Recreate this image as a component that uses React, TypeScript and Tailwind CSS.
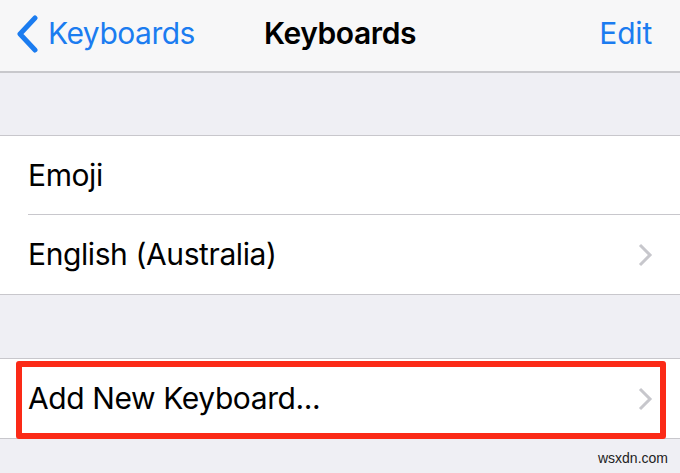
import React from "react";

const font = { fontFamily: "Inter, 'Noto Sans', sans-serif" };

function Chevron() {
  return (
    <svg width="16" height="24" viewBox="0 0 16 24" className="shrink-0">
      <path d="M3 2 L13 12 L3 22" fill="none" stroke="#c7c7cc" strokeWidth="3" />
    </svg>
  );
}

function Row({ label, chevron, separator }: { label: string; chevron?: boolean; separator?: boolean }) {
  return (
    <div className="bg-white pl-[28px]">
      <div className={`flex h-[79px] items-center pr-[27px] ${separator ? "border-b border-[#c8c7cc]" : ""}`}>
        <span className="flex-1 text-[30px] text-black tracking-[-0.4px]">{label}</span>
        {chevron && <Chevron />}
      </div>
    </div>
  );
}

export default function App() {
  return (
    <div className="w-[680px] h-[473px] bg-[#efeff4] overflow-hidden relative" style={font}>
      <div className="h-[73px] bg-[#f7f7f8] border-b-2 border-[#c8c8cc] flex items-center px-[16px] pb-[4px] relative">
        <div className="flex items-center gap-[10px] text-[#1b7cf0]">
          <svg width="22" height="38" viewBox="0 0 22 38">
            <path d="M19 3 L4 19 L19 35" fill="none" stroke="#1b7cf0" strokeWidth="5" strokeLinecap="round" strokeLinejoin="round" />
          </svg>
          <span className="text-[30px] tracking-[-0.5px]">Keyboards</span>
        </div>
        <div className="absolute left-0 right-0 text-center text-[30px] font-semibold text-black tracking-[-0.4px] pointer-events-none">
          Keyboards
        </div>
        <span className="ml-auto mr-[12px] text-[30px] text-[#1b7cf0] tracking-[-0.2px]">Edit</span>
      </div>

      <div className="h-[63px] border-b border-[#c8c7cc]" />
      <Row label="Emoji" separator />
      <Row label="English (Australia)" chevron />
      <div className="h-[65px] border-y border-[#c8c7cc]" />
      <div className="relative">
        <Row label="Add New Keyboard..." chevron />
        <div className="absolute left-[16px] right-[14px] top-[2px] bottom-[-1px] border-[6px] border-[#fb2a17] rounded-[3px]" />
      </div>
      <div className="border-t border-[#c8c7cc]" />
      <div className="absolute right-[12px] bottom-[4px] text-[14px] text-[#222]" style={{ fontFamily: "'Liberation Sans', sans-serif" }}>
        wsxdn.com
      </div>
    </div>
  );
}
